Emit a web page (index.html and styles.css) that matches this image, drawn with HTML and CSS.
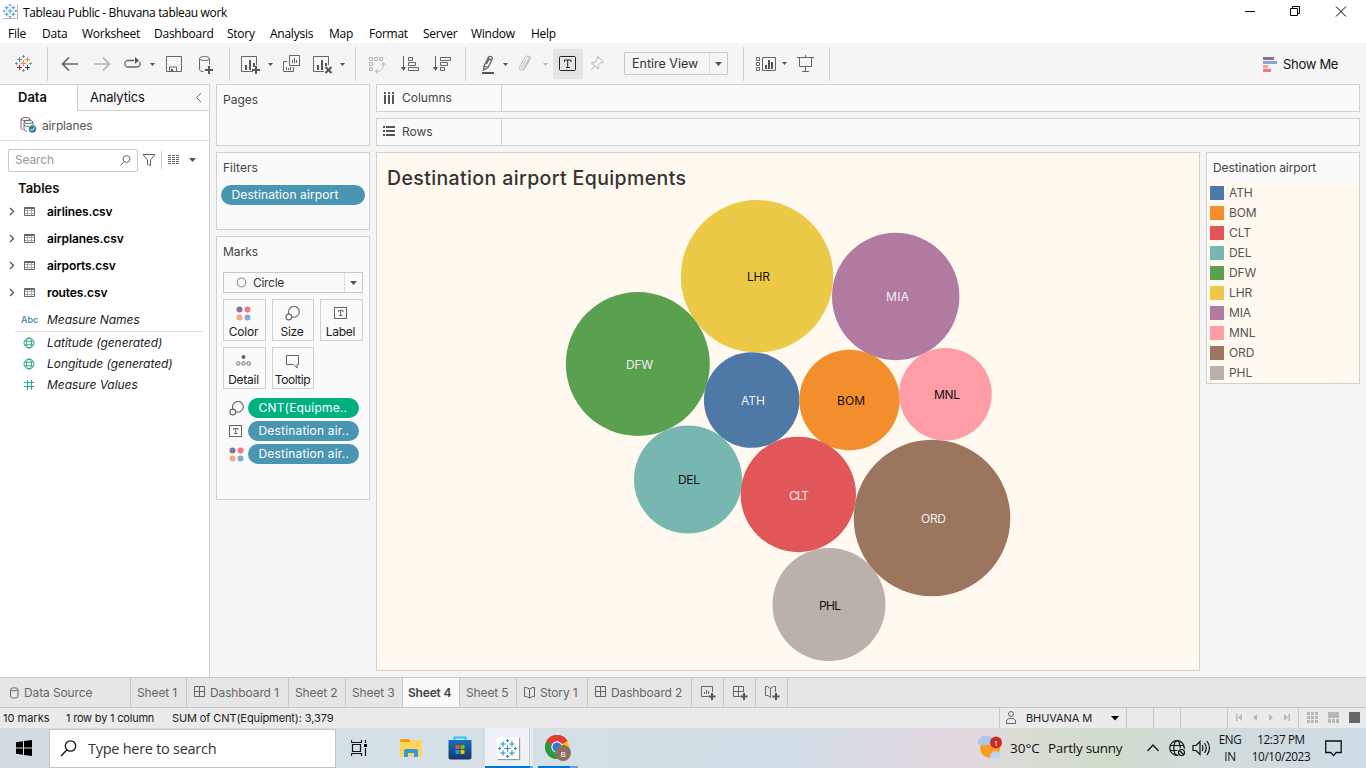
FILE: index.html
```html
<!DOCTYPE html>
<html lang="en">
<head>
<meta charset="utf-8">
<title>Tableau Public - Bhuvana tableau work</title>
<link rel="stylesheet" href="styles.css">
</head>
<body>
<svg class="defs" width="0" height="0">
  <symbol id="logo" viewBox="0 0 17 17"><path d="M8.500 5.500v6M5.500 8.500h6" stroke="#eb912b"/><path d="M4.500 2v5M2 4.500h5" stroke="#5c87a5"/><path d="M12.500 2v5M10 4.500h5" stroke="#eb912b"/><path d="M4.500 10v5M2 12.500h5" stroke="#c72037"/><path d="M12.500 10v5M10 12.500h5" stroke="#1f457e"/><path d="M8.500 0v3M7 1.500h3M8.500 14v3M7 15.500h3M1.500 7v3M0 8.500h3M15.500 7v3M14 8.500h3" stroke="#7099a6"/></symbol>
  <symbol id="bluelogo" viewBox="0 0 17 17"><path d="M8.500 5.500v6M5.500 8.500h6M4.500 2v5M2 4.500h5M12.500 2v5M10 4.500h5M4.500 10v5M2 12.500h5M12.500 10v5M10 12.500h5M8.500 0v3M7 1.500h3M8.500 14v3M7 15.500h3M1.500 7v3M0 8.500h3M15.500 7v3M14 8.500h3" stroke="#3b8dbb"/></symbol>
  <symbol id="caret" viewBox="0 0 7 4"><path d="M0 0h7L3.500 4z" fill="#555"/></symbol>
  <symbol id="table" viewBox="0 0 11 11"><path d="M1 4.500h9M1 7.500h9M3.500 3v7M7.500 3v7" fill="none" stroke="#aaa"/><path d="M.5 1.500h10v8H.5zM.5 2.500h10" fill="none" stroke="#666"/></symbol>
  <symbol id="chev" viewBox="0 0 6 9"><path d="M1 1l3.500 3.500L1 8" fill="none" stroke="#555" stroke-width="1.300"/></symbol>
  <symbol id="globe" viewBox="0 0 12 12"><g fill="none" stroke="#35a97d"><circle cx="6" cy="6" r="5"/><ellipse cx="6" cy="6" rx="2.500" ry="5"/><path d="M1.500 4.200h9M1.500 7.800h9"/></g></symbol>
  <symbol id="dots" viewBox="0 0 15 15"><circle cx="3.500" cy="3.500" r="3" fill="#8a6f9b"/><circle cx="11.500" cy="3.500" r="3" fill="#fa7484"/><circle cx="3.500" cy="11.500" r="3" fill="#f2a97e"/><circle cx="11.500" cy="11.500" r="3" fill="#86a9d0"/></symbol>
  <symbol id="size" viewBox="0 0 15 15"><g fill="none" stroke="#666" stroke-width="1.100"><path d="M4 8A5.400 5.400 0 1 1 6.500 10.600"/><circle cx="3.800" cy="11" r="2.900"/></g></symbol>
  <symbol id="label" viewBox="0 0 14 13"><rect x=".5" y=".5" width="12" height="11" fill="none" stroke="#666"/><path d="M4.500 5V3.500h4.500V5M6.700 3.500v5M5 8.500h3.500" fill="none" stroke="#666"/></symbol>
  <symbol id="grid" viewBox="0 0 12 12"><path d="M.5 .5h10v10H.5V.5zM5.500 .5v10M.5 5.500h10" fill="none" stroke="#666"/></symbol>
  <symbol id="book" viewBox="0 0 12 13"><path d="M.5 1.500H2.500L5.500 3 8.500 1.500h2v9h-2L5.500 12 2.500 10.500h-2zM5.500 3v9" fill="none" stroke="#666"/></symbol>
</svg>

<div class="window">
  <header class="titlebar">
    <span class="appicon"><svg width="14" height="14"><use href="#bluelogo"/></svg></span>
    <span class="title">Tableau Public - Bhuvana tableau work</span>
    <svg class="winbtns" width="121" height="22" viewBox="1245 0 121 22"><g fill="none" stroke="#000"><path d="M1245 10.500h10M1290.500 7.500h7v7h-7zM1292.500 7V5.500h7v7H1298M1336 5.500l10 10M1346 5.500l-10 10"/></g></svg>
  </header>
  <nav class="menu"><span class="m1">File</span><span class="m2">Data</span><span class="m3">Worksheet</span><span class="m4">Dashboard</span><span class="m5">Story</span><span class="m6">Analysis</span><span class="m7">Map</span><span class="m8">Format</span><span class="m9">Server</span><span class="m10">Window</span><span>Help</span></nav>

  <div class="toolbar">
    <div class="group g-logo"><svg width="17" height="17"><use href="#logo"/></svg></div>
    <div class="group">
      <svg width="37" height="34" viewBox="48 47 37 34"><path d="M78 64H63M69 57.500L62.500 64 69 70.500" class="k3"/></svg>
      <svg width="33" height="34" viewBox="85 47 33 34"><path d="M94 64h15M103 57.500l6.500 6.500-6.500 6.500" class="k3 pale"/></svg>
      <svg width="41" height="34" viewBox="118 47 41 34"><path d="M134 60.500h-7a3.500 3.500 0 0 0 0 6.500h9.500c3.500 0 4.500-3 3-5" class="k13"/><path d="M139 60.500l-4-3.500v7z" class="f"/><path d="M150 63h5l-2.500 3z" class="f"/></svg>
      <svg width="30" height="34" viewBox="159 47 30 34"><path d="M166.500 56.500h15v15h-15zM169.500 71v-4h7v4" class="k"/><path d="M171 69h2v2h-2z" class="f"/></svg>
      <svg width="40" height="34" viewBox="189 47 40 34"><path d="M199.500 58.500v11c0 1.500 2 2 4 2.200M209.500 58.500v6" class="k"/><ellipse cx="204.500" cy="58.500" rx="5" ry="2" class="k"/><path d="M209 66v8M205 70h8" class="k2"/></svg>
    </div>
    <div class="group">
      <svg width="46" height="34" viewBox="230 47 46 34"><path d="M253 71.500h-11.500v-15h15V65" class="k"/><path d="M245 65h2v5h-2zM249 60h2v10h-2zM253 63h2v4h-2z" class="f"/><path d="M256 66v8M252 70h8" class="k2"/><path d="M268 63h5l-2.500 3z" class="f"/></svg>
      <svg width="32" height="34" viewBox="276 47 32 34"><path d="M289.500 55.500h10v10h-10zM287 61.500h-3.500v10h10V67" class="k"/><path d="M292.500 60v3M294.500 58v5M296.500 60v3M286.500 67v3M288.500 68v2M290.500 67v3" class="k"/></svg>
      <svg width="47" height="34" viewBox="308 47 47 34"><path d="M324 71.500h-10.500v-15h15V65" class="k"/><path d="M317 65h2v5h-2zM321 60h2v10h-2zM325 63h2v3h-2z" class="f"/><path d="M325.500 67l6 6M331.500 67l-6 6" class="k2"/><path d="M340 63h5l-2.500 3z" class="f"/></svg>
    </div>
    <div class="group">
      <svg width="37" height="34" viewBox="356 47 37 34"><path d="M369.500 57.500h3v3h-3zM374.500 57.500h3v3h-3zM379.500 57.500h3v3h-3zM369.500 62.500h3v3h-3zM369.500 67.500h3v3h-3zM376 71.500c5 0 7.500-2.500 7.500-8M378 69l-3 2.500 3 2M381 65.500l2.500-3 2.500 3" class="k pale"/></svg>
      <svg width="33" height="34" viewBox="393 47 33 34"><path d="M403.500 56v14M408.500 57.500h4v3h-4zM408.500 62.500h7v3h-7zM408.500 67.500h10v3h-10z" class="k"/><path d="M401 67h5l-2.500 4z" class="f"/></svg>
      <svg width="39" height="34" viewBox="426 47 39 34"><path d="M435.500 56v14M440.500 57.500h10v3h-10zM440.500 62.500h7v3h-7zM440.500 67.500h4v3h-4z" class="k"/><path d="M433 67h5l-2.500 4z" class="f"/></svg>
    </div>
    <div class="group">
      <svg width="46" height="34" viewBox="466 47 46 34"><path d="M484 66l4.500-9c1-1.500 4.500 0 4 1.500l-4.500 9-4.500 2.500zM484 66l4 1.500M488 58.500l3.500 1.700M486.500 64l3-6" class="k13"/><path d="M482 72h12v2h-12z" class="f"/><path d="M503 63h5l-2.500 3z" class="f"/></svg>
      <svg width="41" height="34" viewBox="512 47 41 34"><path d="M526 60l-4 7c-.7 1.500 1.300 2.500 2 1l4.500-8c2-4-2-5-3.500-2.500l-5 8.500c-2 4 2.500 6 4.500 2.500l5-8c2-3.500 0-5-2-4" class="k pale"/><path d="M543 63h5l-2.500 3z" class="fpale"/></svg>
      <svg class="pressed" width="30" height="30" viewBox="553 49 30 30"><rect x="559.500" y="56.500" width="16" height="14" rx="1" fill="none" stroke="#222"/><path d="M564.500 62v-2h6.500v2M567.700 60v7M566 67.500h4" fill="none" stroke="#222"/></svg>
      <svg width="41" height="34" viewBox="583 47 41 34"><path d="M597.500 56.500l6 5.500-1 1-2-.3-2.500 3 .3 3.300-7-6 4-.8 2-3.500zM595 66l-4 4" class="k pale"/></svg>
      <div class="combo"><span>Entire View</span><b><svg width="7" height="4"><use href="#caret"/></svg></b></div>
    </div>
    <div class="group g-view">
      <svg width="46" height="34" viewBox="744 47 46 34"><path d="M756.500 57.500h3v3h-3zM756.500 62.500h3v3h-3zM756.500 67.500h3v3h-3zM762.500 57.500h13v13h-13z" class="k"/><path d="M765 65h2v4h-2zM768 60h2v9h-2zM771 62h2v7h-2z" class="f"/><path d="M782 62h5l-2.500 3z" class="f"/></svg>
      <svg width="39" height="34" viewBox="790 47 39 34"><path d="M797 57.500h17M799.500 58v8.500h12V58M805.500 55v2M805.500 67v4M802 71.500h7" class="k"/></svg>
    </div>
    <div class="showme"><svg width="15" height="16"><path d="M0 1h11v3H0z" fill="#8a6f9b"/><path d="M0 5h14v3H0z" fill="#86a9d0"/><path d="M0 9h5v3H0z" fill="#f2a97e"/><path d="M0 13h8v3H0z" fill="#fa7484"/></svg><span>Show Me</span></div>
  </div>

  <main class="work">
    <aside class="data">
      <div class="dtabs"><b>Data</b><div><span>Analytics</span><svg width="7" height="12"><path d="M6 1L1.500 5.500 6 10" class="k"/></svg></div></div>
      <div class="source"><svg width="17" height="17" viewBox="20 117 17 17"><g class="k"><ellipse cx="25.500" cy="119" rx="4.500" ry="1.500"/><path d="M21 119v9c0 1 1 1.500 2 1.700M30 119v1"/><ellipse cx="28.500" cy="122" rx="4.500" ry="1.500"/><path d="M24 122v7c0 1.500 1 2 3 2.300M33 122v3M24 125c1 1.500 4 1.500 5 1"/></g><circle cx="32.500" cy="129" r="3.700" fill="#35809f"/><path d="M30.500 129l1.500 1.500 2.500-3" stroke="#fff" fill="none"/></svg><span>airplanes</span></div>
      <div class="searchrow">
        <div class="search"><span>Search</span><svg width="11" height="11"><circle cx="6.500" cy="4" r="3.400" class="k"/><path d="M4 6.500L.5 10.500" class="k"/></svg></div>
        <svg width="14" height="14"><path d="M1 1.500h12L8.500 7v5.500l-3-1V7z" class="k"/></svg>
        <i></i>
        <svg width="13" height="12"><path d="M0 1.500h12M0 3.500h12M0 5.500h12M0 7.500h12M0 9.500h12" stroke="#666" stroke-dasharray="3 1" fill="none"/></svg>
        <svg class="dd" width="7" height="4"><use href="#caret"/></svg>
      </div>
      <h3>Tables</h3>
      <div class="tbl"><svg width="6" height="9"><use href="#chev"/></svg><svg width="11" height="11"><use href="#table"/></svg><b>airlines.csv</b></div>
      <div class="tbl"><svg width="6" height="9"><use href="#chev"/></svg><svg width="11" height="11"><use href="#table"/></svg><b>airplanes.csv</b></div>
      <div class="tbl"><svg width="6" height="9"><use href="#chev"/></svg><svg width="11" height="11"><use href="#table"/></svg><b>airports.csv</b></div>
      <div class="tbl"><svg width="6" height="9"><use href="#chev"/></svg><svg width="11" height="11"><use href="#table"/></svg><b>routes.csv</b></div>
      <div class="field names"><strong>Abc</strong><em>Measure Names</em></div>
      <div class="field"><svg width="12" height="12"><use href="#globe"/></svg><em>Latitude (generated)</em></div>
      <div class="field"><svg width="12" height="12"><use href="#globe"/></svg><em>Longitude (generated)</em></div>
      <div class="field"><svg width="12" height="12"><path d="M4.500 1v10M8.500 1v10M1 3.500h10M1 7.500h10" stroke="#35a97d"/></svg><em>Measure Values</em></div>
    </aside>

    <section class="cards">
      <div class="card pages"><h4>Pages</h4></div>
      <div class="card filters"><h4>Filters</h4><div class="pill blue">Destination airport</div></div>
      <div class="card marks"><h4>Marks</h4>
        <div class="marktype"><svg width="11" height="11"><circle cx="5.500" cy="5.500" r="4.300" fill="none" stroke="#999" stroke-width="1.300"/></svg><span>Circle</span><b><svg width="7" height="4"><use href="#caret"/></svg></b></div>
        <div class="buttons">
          <div><svg width="15" height="15"><use href="#dots"/></svg><span>Color</span></div>
          <div><svg width="15" height="15"><use href="#size"/></svg><span>Size</span></div>
          <div><svg class="drop" width="14" height="13"><use href="#label"/></svg><span>Label</span></div>
          <div><svg class="drop" width="15" height="12"><circle cx="7.500" cy="2" r="2" fill="#666"/><g class="k"><circle cx="2.300" cy="8.500" r="1.700"/><circle cx="7.500" cy="8.500" r="1.700"/><circle cx="12.700" cy="8.500" r="1.700"/></g></svg><span>Detail</span></div>
          <div><svg class="drop" width="15" height="14"><path d="M1.500.5h12v9h-1.500v3.500L8.500 9.500h-7z" class="k"/></svg><span class="tip">Tooltip</span></div>
        </div>
        <div class="shelf"><svg width="15" height="15"><use href="#size"/></svg><div class="pill green">CNT(Equipme..</div></div>
        <div class="shelf"><svg width="14" height="13"><use href="#label"/></svg><div class="pill blue">Destination air..</div></div>
        <div class="shelf"><svg width="15" height="15"><use href="#dots"/></svg><div class="pill blue">Destination air..</div></div>
      </div>
    </section>

    <section class="sheet">
      <div class="axis"><div><svg width="12" height="12"><path d="M2 0v2M2 3v9M6 0v2M6 3v9M10 0v2M10 3v9" stroke="#555" stroke-width="2"/></svg><span>Columns</span></div></div>
      <div class="axis"><div><svg width="12" height="12"><path d="M0 1h2M3 1h9M0 5h2M3 5h9M0 9h2M3 9h9" stroke="#555" stroke-width="2"/></svg><span>Rows</span></div></div>
      <div class="viewrow">
        <div class="viz">
          <svg width="822" height="517" viewBox="377 153 822 517">
            <text x="387" y="185" class="vtitle" textLength="299">Destination airport Equipments</text>
            <circle cx="757" cy="276.300" r="76.200" fill="#edc948"/><circle cx="895.700" cy="296.500" r="63.700" fill="#b07aa1"/>
            <circle cx="637.800" cy="364" r="72" fill="#59a14f"/><circle cx="751.700" cy="400" r="47.800" fill="#4e79a7"/>
            <circle cx="849.500" cy="400" r="50.200" fill="#f28e2b"/><circle cx="945.500" cy="394.200" r="46.300" fill="#ff9da7"/>
            <circle cx="688" cy="479.500" r="54" fill="#76b7b2"/><circle cx="798.300" cy="494.500" r="57.700" fill="#e15759"/>
            <circle cx="932" cy="518" r="78.300" fill="#9c755f"/><circle cx="829" cy="604.500" r="56.500" fill="#bab0ac"/>
            <g class="clabel"><text x="747" y="281" textLength="23">LHR</text><text x="886" y="301" textLength="23" class="w">MIA</text><text x="626" y="369" textLength="27" class="w">DFW</text><text x="741" y="405" textLength="24" class="w">ATH</text><text x="837" y="405" textLength="28">BOM</text><text x="934" y="399" textLength="26">MNL</text><text x="678" y="484" textLength="22">DEL</text><text x="789" y="500" textLength="20" class="w">CLT</text><text x="921" y="523" textLength="25" class="w">ORD</text><text x="819" y="610" textLength="22">PHL</text></g>
          </svg>
        </div>
        <div class="legend"><h4>Destination airport</h4>
          <ul><li><i class="c1"></i>ATH</li><li><i class="c2"></i>BOM</li><li><i class="c3"></i>CLT</li><li><i class="c4"></i>DEL</li><li><i class="c5"></i>DFW</li><li><i class="c6"></i>LHR</li><li><i class="c7"></i>MIA</li><li><i class="c8"></i>MNL</li><li><i class="c9"></i>ORD</li><li><i class="c10"></i>PHL</li></ul>
        </div>
      </div>
    </section>
  </main>

  <div class="tabs">
    <div class="w131"><svg width="10" height="12"><path d="M.5 2.500v7c0 2 7.500 2 7.500 0v-7" class="k"/><ellipse cx="4.250" cy="2.300" rx="3.750" ry="1.500" class="k"/></svg><span>Data Source</span></div>
    <div class="w56"><span>Sheet 1</span></div>
    <div class="w102"><svg width="12" height="12"><use href="#grid"/></svg><span>Dashboard 1</span></div>
    <div class="w57"><span>Sheet 2</span></div>
    <div class="w57"><span>Sheet 3</span></div>
    <div class="w57 active"><span>Sheet 4</span></div>
    <div class="w57"><span>Sheet 5</span></div>
    <div class="w71"><svg width="12" height="13"><use href="#book"/></svg><span>Story 1</span></div>
    <div class="w104"><svg width="12" height="12"><use href="#grid"/></svg><span>Dashboard 2</span></div>
    <div class="add"><svg width="16" height="15"><path d="M7 10.500H.5V.5h11V6M3.500 6v2M5.500 4v4M7.500 5v3" class="k"/><path d="M11 7v7M7.500 10.500h7" class="k2"/></svg></div>
    <div class="add"><svg width="16" height="15"><path d="M7 10.500H.5V.5h10V6M5.500.5v10M.5 5.500h10" class="k"/><path d="M11 7v7M7.500 10.500h7" class="k2"/></svg></div>
    <div class="add"><svg width="16" height="15"><path d="M5.500 11.500L3 9.500H.5V.5H2.500L5.500 2.500 8.500.5h2V6M5.500 2.500v9" class="k"/><path d="M11 7v7M7.500 10.500h7" class="k2"/></svg></div>
  </div>

  <div class="status">
    <div class="stext"><span class="s1">10 marks</span><span class="s2">1 row by 1 column</span><span class="s3">SUM of CNT(Equipment): 3,379</span></div>
    <div class="user"><svg width="11" height="14"><path d="M.5 12.500V10C.5 6.500 9.500 6.500 9.500 10v2.500z" class="k"/><circle cx="5" cy="3" r="2.500" class="k"/></svg><span>BHUVANA M</span><svg width="8" height="5"><path d="M0 0h8L4 4.500z"/></svg></div>
    <div class="cell"></div><div class="cell"></div><div class="cell wide"></div>
    <div class="nav"><svg width="70" height="20" viewBox="1228 708 70 20"><path d="M1236 714h1.500v7H1236zM1242 714v7l-4-3.500zM1257 714v7l-4-3.500zM1269 714v7l4-3.500zM1284 714v7l4-3.500zM1288.500 714h1.500v7h-1.500z" fill="#b8b8b8"/></svg></div>
    <svg width="67" height="20" viewBox="1299 708 67 20"><path d="M1307 712h3v3h-3zM1311 712h3v3h-3zM1315 712h3v3h-3zM1307 716h3v3h-3zM1311 716h3v3h-3zM1315 716h3v3h-3zM1307 720h3v3h-3zM1311 720h3v3h-3zM1315 720h3v3h-3zM1328 712h11v6h-11zM1328 719h3v4h-3zM1332 719h3v4h-3zM1336 719h3v4h-3z" fill="#b8b8b8"/><path d="M1349 712h11v11h-11z" fill="#666"/></svg>
  </div>

  <footer class="taskbar">
    <div class="start"><svg width="16" height="16"><path d="M0 2.200L7 1.200v6.300H0zM8 1L16 0v7.500H8zM0 8.500h7v6.300l-7-1zM8 8.500h8V16l-8-1z"/></svg></div>
    <div class="tsearch"><svg width="17" height="17"><circle cx="10.500" cy="6" r="5.200" fill="none" stroke="#111" stroke-width="1.300"/><path d="M7 9.800L1 16" stroke="#111" stroke-width="1.300"/></svg><span>Type here to search</span></div>
    <div class="tb tview"><svg width="17" height="16"><path d="M.5 0v2.500h10V0M.5 16v-2.500h10V16M1.500 4.500h8v7h-8zM14.500 0v3M14.500 8v8" fill="none" stroke="#111" stroke-width="1.200"/><path d="M13 4h3v3h-3z"/></svg></div>
    <div class="tb folder"><svg width="22" height="19"><path d="M0 1.500Q0 0 1.500 0H9l2 3H0z" fill="#e8a300"/><path d="M0 3h10l2-2h8q1.500 0 1.500 1.500V18H0z" fill="#ffd35c"/><path d="M4 18v-6q0-2 2-2h10q2 0 2 2v6h-4v-4H8v4z" fill="#3399dc"/></svg></div>
    <div class="tb"><svg width="24" height="24"><defs><linearGradient id="st" x2="0" y2="1"><stop stop-color="#1272ba"/><stop offset="1" stop-color="#17346a"/></linearGradient></defs><path d="M6.500 6V1.500h11V6" fill="none" stroke="#2ac6ec" stroke-width="2"/><path d="M.5 4h23v17q0 2.500-2.500 2.500H3Q.5 23.500.5 21z" fill="url(#st)"/><path d="M7.500 9h4v4h-4z" fill="#f25022"/><path d="M12.500 9h4v4h-4z" fill="#7fba00"/><path d="M7.500 14h4v4h-4z" fill="#00a4ef"/><path d="M12.500 14h4v4h-4z" fill="#ffb900"/></svg></div>
    <div class="tb open"><div><svg width="19" height="19"><use href="#bluelogo"/></svg></div></div>
    <div class="tb chrome"><svg width="27" height="27"><circle cx="12" cy="12" r="12" fill="#fbc116"/><path d="M12 12L1.600 6A12 12 0 0 1 22.400 6z" fill="#df3e32"/><path d="M12 12L1.600 6A12 12 0 0 0 12 24l5-9z" fill="#279847"/><path d="M6 6h16.500A12 12 0 0 0 1.600 6l5 5z" fill="#df3e32"/><circle cx="12" cy="12" r="5.700" fill="#fff"/><circle cx="12" cy="12" r="4.600" fill="#2f72e4"/><circle cx="18" cy="18" r="8" fill="#8d6e63"/><text x="18" y="21.500" text-anchor="middle" class="badge">B</text></svg></div>
    <div class="weather"><svg width="25" height="24"><circle cx="12" cy="12" r="10" fill="#f89c24"/><path d="M2 9a3 3 0 0 1 1-6 5 5 0 0 1 10-1v7z" fill="#a9c8ef"/><path d="M13 22a3 3 0 0 1 1-5 4 4 0 0 1 7 0 3 3 0 0 1 1 5z" fill="#bcd4f3"/><circle cx="18" cy="6.500" r="6" fill="#c92c23"/><text x="18" y="9.500" text-anchor="middle" class="badge">1</text></svg><span class="deg">30°C</span><span class="cond">Partly sunny</span></div>
    <div class="tray"><svg width="66" height="24" viewBox="1146 736 66 24"><g fill="none" stroke="#111" stroke-width="1.200"><path d="M1147.500 751l5.500-6 5.500 6M1193 745.500h3l4-4v13l-4-4h-3zM1202 745q2 3 0 6M1204.500 743q3.500 5 0 10M1207 741q5 7 0 14"/><circle cx="1177" cy="748" r="7.300"/><ellipse cx="1177" cy="748" rx="3.200" ry="7.300"/><path d="M1170 745.500h14M1170 750.500h9"/></g><circle cx="1181.500" cy="752.500" r="4.500" fill="#d5dfd5"/><g fill="none" stroke="#111" stroke-width="1.200"><circle cx="1181.500" cy="752.500" r="3"/><path d="M1179.500 750.500l4 4"/></g></svg></div>
    <div class="lang"><span>ENG</span><span>IN</span></div>
    <div class="clock"><span>12:37 PM</span><span>10/10/2023</span></div>
    <div class="notify"><svg width="17" height="17"><path d="M.7 1h15.500v11.500h-5L8.500 15.500l-2.700-3H.7z" fill="none" stroke="#111" stroke-width="1.300"/></svg></div>
  </footer>
</div>
</body>
</html>
```

FILE: styles.css
```css
* { box-sizing: border-box; }
body { margin: 0; font: 12px/16px Inter, "Liberation Sans", sans-serif; color: #333; overflow: hidden; }
h3, h4, ul { margin: 0; padding: 0; }
svg { display: block; flex: none; }
span, b, em { white-space: nowrap; }
.defs { position: absolute; }
.k { fill: none; stroke: #666; stroke-width: 1; }
.k13 { fill: none; stroke: #666; stroke-width: 1.3; }
.k2 { fill: none; stroke: #555; stroke-width: 2; }
.k3 { fill: none; stroke: #666; stroke-width: 1.7; }
.f { fill: #555; }
.pale { stroke: #b4b4b4; }
.fpale { fill: #b4b4b4; }
.window { width: 1366px; height: 768px; display: flex; flex-direction: column; background: #f5f5f5; }

.titlebar { height: 23px; background: #fff; display: flex; align-items: center; font: 12px "Open Sans", sans-serif; color: #000; }
.appicon { margin-left: 3px; width: 15px; height: 15px; border: solid #b5b5b5; border-width: 0 1px 1px 0; }
.title { margin: 1px 0 0 5px; letter-spacing: -.34px; }
.winbtns { margin-left: auto; }
.menu { height: 20px; background: #fff; display: flex; padding: 1px 0 0 8px; font: 12px/20px "Open Sans", sans-serif; letter-spacing: -.25px; color: #000; }
.m1 { width: 34px; } .m2 { width: 40px; } .m3 { width: 72px; } .m4 { width: 73px; } .m5 { width: 43px; }
.m6 { width: 59px; } .m7 { width: 40px; } .m8 { width: 54px; } .m9 { width: 48px; } .m10 { width: 60px; }

.toolbar { height: 41px; flex: none; display: flex; align-items: center; background: #f5f5f5; }
.group { display: flex; align-items: center; height: 34px; border-right: 1px solid #d0d0d0; }
.g-logo { width: 48px; padding-left: 15px; }
.pressed { background: #e5e5e5; }
.combo { width: 104px; height: 23px; margin-right: 15px; border: 1px solid #c8c8c8; border-radius: 2px; display: flex; font-size: 12.5px; line-height: 21px; }
.combo span { width: 85px; padding-left: 7px; border-right: 1px solid #ddd; }
.combo b { display: grid; place-items: center; flex: 1; }
.showme { margin-left: auto; width: 103px; display: flex; gap: 5px; align-items: center; font-size: 13px; letter-spacing: -.3px; color: #111; }

.work { height: 593px; display: flex; flex: none; }
.data { width: 210px; background: #fff; border: solid #d0d0d0; border-width: 1px 1px 0 0; }
.dtabs { height: 26px; display: flex; font-size: 13px; line-height: 25px; color: #111; }
.dtabs > b { width: 77px; padding-left: 18px; font-weight: 600; }
.dtabs > div { flex: 1; display: flex; align-items: center; justify-content: space-between; padding: 0 7px 0 12px; border: solid #d0d0d0; border-width: 0 0 1px 1px; background: #fafafa; letter-spacing: -.2px; }
.source { height: 30px; display: flex; align-items: center; gap: 5px; padding-left: 20px; border-bottom: 1px solid #e0e0e0; color: #555; letter-spacing: -.15px; }
.searchrow { height: 38px; display: flex; align-items: center; padding-left: 8px; }
.search { width: 130px; height: 23px; border: 1px solid #c8c8c8; border-radius: 2px; display: flex; align-items: center; justify-content: space-between; padding: 0 6px; color: #999; margin-right: 4px; letter-spacing: -.15px; }
.searchrow i { width: 1px; height: 18px; background: #d0d0d0; margin: 0 6px 0 5px; }
.dd { margin-left: 8px; }
.data h3 { font-size: 13px; font-weight: 600; line-height: 18px; height: 19px; padding-left: 18px; color: #111; }
.tbl { height: 27px; display: flex; align-items: center; padding-left: 9px; color: #000; }
.tbl svg + svg { margin: 0 12px 0 9px; }
.tbl b { font-weight: 600; letter-spacing: -.1px; }
.field { height: 21px; display: flex; align-items: center; padding-left: 23px; gap: 12px; color: #222; }
.field em { display: block; letter-spacing: -.05px; }
.field strong { width: 17px; margin-left: -2px; font-size: 9px; font-weight: 500; color: #35809f; }
.names { height: 26px; margin: 0 6px 0 15px; padding: 2px 0 0 8px; gap: 9px; border-bottom: 1px solid #e0e0e0; }

.cards { width: 154px; margin-left: 6px; display: flex; flex-direction: column; gap: 6px; }
.card { border: 1px solid #d0d0d0; background: #fafafa; padding: 7px 6px; }
h4 { font-weight: 400; font-size: 12px; line-height: 16px; color: #444; }
.pages { height: 62px; } .filters { height: 78px; } .marks { height: 264px; }
.pill { height: 20px; border-radius: 10px; color: #fff; padding-left: 10.5px; line-height: 20px; white-space: nowrap; letter-spacing: .12px; }
.blue { background: #4996b2; } .green { background: #00b180; }
.filters .pill { margin: 9px -2px 0; }
.marktype { height: 21px; margin-top: 12px; border: 1px solid #c8c8c8; display: flex; align-items: center; padding-left: 12px; }
.marktype span { margin-left: 6px; letter-spacing: -.3px; }
.marktype b { margin-left: auto; width: 18px; height: 19px; border-left: 1px solid #ddd; display: grid; place-items: center; }
.buttons { display: grid; grid-template-columns: 43px 42px 43px; gap: 6px; margin-top: 6px; margin-bottom: 9px; }
.buttons > div { height: 42px; border: 1px solid #d0d0d0; display: flex; flex-direction: column; align-items: center; justify-content: space-between; padding: 6px 2px 0 0; color: #222; letter-spacing: -.25px; }
.buttons .drop { margin-top: 1px; }
.buttons .tip { letter-spacing: -.45px; margin-right: -1px; }
.shelf { display: flex; align-items: center; height: 20px; margin-bottom: 3px; padding-left: 6px; }
.shelf .pill { width: 111px; margin-left: auto; margin-right: 4px; letter-spacing: .18px; }

.sheet { width: 984px; margin-left: 6px; display: flex; flex-direction: column; gap: 6px; }
.axis { height: 28px; border: 1px solid #d0d0d0; background: #fafafa; display: flex; }
.axis > div { width: 125px; border-right: 1px solid #d0d0d0; display: flex; align-items: center; gap: 7px; padding-left: 6px; color: #444; }
.viewrow { display: flex; gap: 6px; align-items: flex-start; }
.viz { width: 824px; height: 519px; border: 1px solid #d0d0d0; background: #fff9f0; }
.vtitle { font: 500 19.5px Inter, sans-serif; fill: #333; }
.clabel { font: 12px Inter, sans-serif; fill: #111; }
.w { fill: #f4eeee; }
.legend { width: 154px; height: 232px; border: 1px solid #d0d0d0; background: #fff9f0; }
.legend h4 { height: 29px; padding: 7px 6px; margin-bottom: 1px; background: #fafafa; letter-spacing: -.08px; }
.legend li { list-style: none; height: 20px; display: flex; align-items: center; gap: 5px; padding-left: 3px; color: #555; letter-spacing: -.1px; }
.legend i { width: 14px; height: 14px; margin-top: -1px; }
.c1 { background: #4e79a7; } .c2 { background: #f28e2b; } .c3 { background: #e15759; } .c4 { background: #76b7b2; } .c5 { background: #59a14f; }
.c6 { background: #edc948; } .c7 { background: #b07aa1; } .c8 { background: #ff9da7; } .c9 { background: #9c755f; } .c10 { background: #bab0ac; }

.tabs { height: 31px; border: solid #c8c8c8; border-width: 1px 0; background: #e6e6e6; display: flex; color: #666; flex: none; letter-spacing: -.12px; }
.tabs > div { border-right: 1px solid #c8c8c8; display: flex; align-items: center; gap: 4px; padding-left: 6px; }
.tabs .w131 { width: 131px; padding-left: 10px; } .w56 { width: 56px; } .w102 { width: 102px; } .w57 { width: 57px; } .w71 { width: 71px; } .w104 { width: 104px; }
.tabs .w102, .tabs .w104, .tabs .w71 { padding-left: 7px; }
.tabs .w102 svg, .tabs .w104 svg { margin-top: -2px; }
.tabs .add { width: 32px; padding: 2px 0 0 9px; }
.tabs .active { background: #fafafa; font-weight: 600; color: #444; letter-spacing: -.2px; padding-left: 5px; }
.status { height: 20px; flex: none; background: #ebebeb; display: flex; font-size: 11px; line-height: 20px; color: #222; letter-spacing: -.1px; }
.stext { width: 999px; display: flex; padding-left: 3px; }
.s1 { width: 63px; } .s2 { width: 106px; letter-spacing: -.2px; }
.s1 { letter-spacing: 0; }
.user { width: 128px; border: solid #c8c8c8; border-width: 0 1px; display: flex; align-items: center; padding: 0 7px 0 6px; }
.user span { margin: 0 auto 0 9px; }
.cell { width: 27px; border-right: 1px solid #c8c8c8; } .wide { width: 47px; }
.nav { width: 71px; border-right: 1px solid #c8c8c8; }

.taskbar { height: 40px; flex: none; display: flex; align-items: center; font: 14px "Open Sans", sans-serif; color: #111; background: linear-gradient(90deg, #d2dae2 0, #d5e0e6 400px, #d3dde5 800px, #e4d7e0 960px, #d9ddd3 1030px, #cfdccb 1110px, #d2dcdc 1200px, #cfdbe5 1366px); }
.start { width: 49px; padding-left: 16px; }
.tsearch { width: 287px; height: 39px; border: 1px solid #c4c4c4; background: #fff; display: flex; align-items: center; gap: 11px; padding-left: 10px; font-size: 14.500px; color: #333; letter-spacing: -.27px; }
.tb { width: 50px; height: 40px; display: grid; place-items: center; }
.open { width: 48px; padding-right: 3px; background: linear-gradient(90deg, #0078d7 45px, #5aa9e6 45px) 0 38px / 100% 2px no-repeat, linear-gradient(90deg, #eef2f6 44px, #c4cdd4 44px, #c4cdd4 45px, #e4ebf0 45px); }
.tview { margin-right: -1px; padding-right: 3px; }
.folder { padding-left: 2px; }
.open > div { width: 22px; height: 22px; background: #fff; box-shadow: 1px 1px 1px #999; display: grid; place-items: center; }
.chrome { width: 40px; margin-left: 5px; padding-top: 1px; background: linear-gradient(90deg, #0078d7 32px, #5aa9e6 32px) 0 38px / 100% 2px no-repeat; }
.badge { font: 8px "Open Sans", sans-serif; fill: #fff; }
.weather { margin-left: auto; width: 168px; display: flex; align-items: center; white-space: nowrap; font-size: 13.500px; }
.deg { margin-left: 7px; width: 38px; } .cond { letter-spacing: -.28px; }
.tray { width: 66px; }
.lang, .clock { display: flex; flex-direction: column; align-items: center; font-size: 11.700px; line-height: 17px; letter-spacing: -.35px; margin-top: -1px; }
.lang { width: 36px; } .clock { width: 66px; }
.notify { width: 52px; padding-left: 11px; }
```
